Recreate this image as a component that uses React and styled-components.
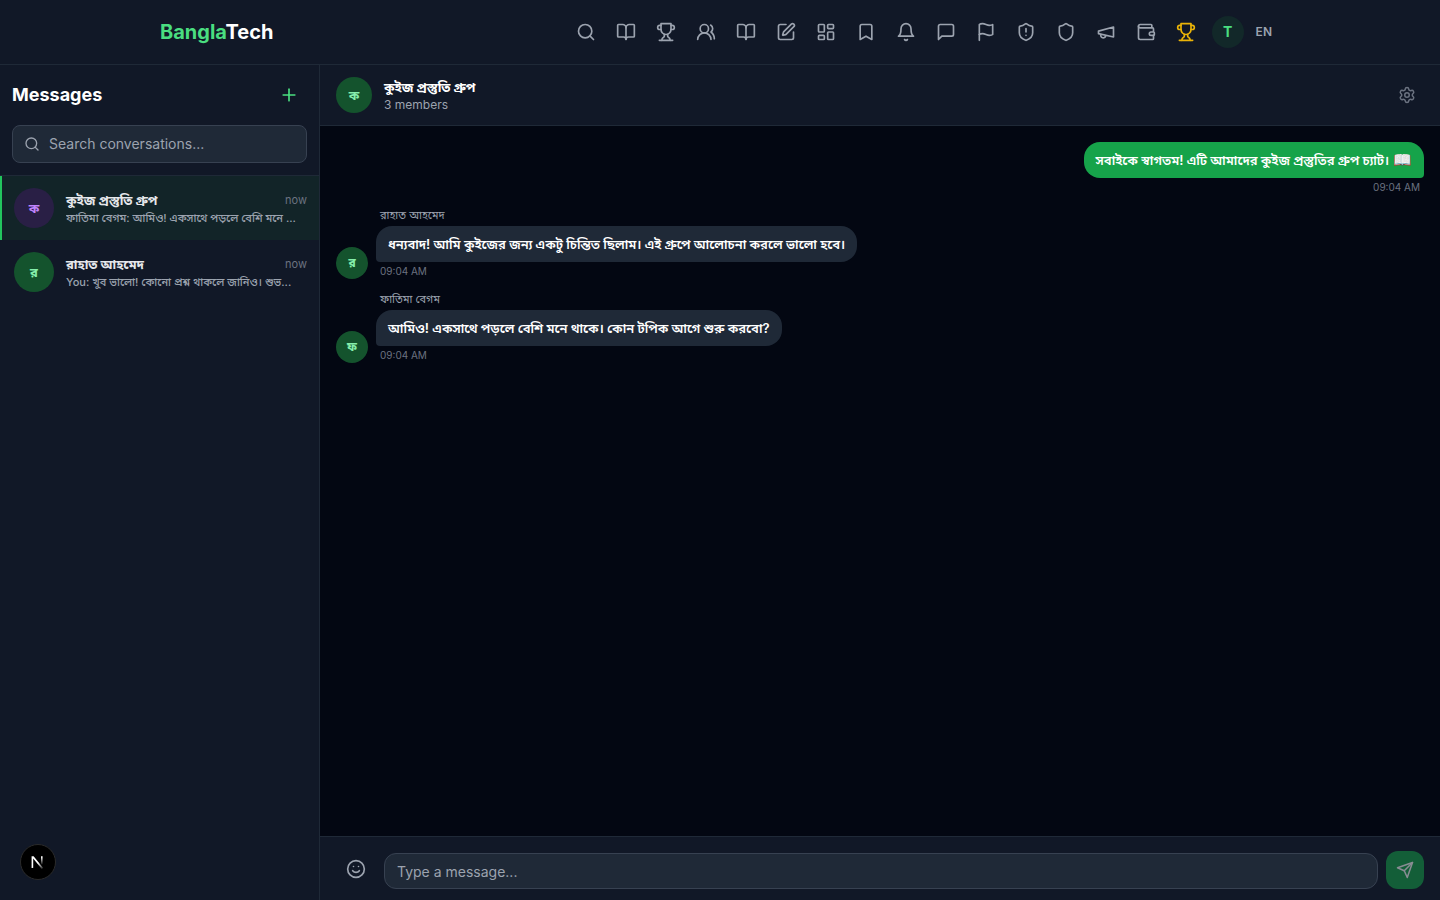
import React from "react";
import styled, { createGlobalStyle } from "styled-components";
import {
  Search,
  BookOpen,
  UsersRound,
  SquarePen,
  LayoutDashboard,
  Bookmark,
  ShieldAlert,
  Shield,
  Wallet,
  Plus,
  Settings,
  Smile,
} from "lucide-react";

const GlobalStyle = createGlobalStyle`
  * {
    box-sizing: border-box;
  }

  body {
    margin: 0;
    background: #030712;
    color: #ffffff;
    font-family: Inter, "Noto Sans Bengali", "Noto Sans", sans-serif;
    font-size: 14px;
    line-height: 20px;
    -webkit-font-smoothing: antialiased;
  }

  button,
  input,
  textarea {
    font: inherit;
  }
`;

const Page = styled.div`
  height: 100vh;
  display: flex;
  flex-direction: column;
  overflow: hidden;
`;

const TopBar = styled.header`
  flex-shrink: 0;
  background: #111827;
  border-bottom: 1px solid #1f2937;
`;

const TopBarInner = styled.div`
  max-width: 1152px;
  height: 64px;
  margin: 0 auto;
  padding: 0 16px;
  display: flex;
  align-items: center;
  justify-content: space-between;
`;

const Logo = styled.a`
  font-size: 20px;
  line-height: 28px;
  font-weight: 700;
  color: #ffffff;
  text-decoration: none;

  span {
    color: #4ade80;
  }
`;

const Nav = styled.nav`
  display: flex;
  align-items: center;
  gap: 4px;
`;

const NavLink = styled.a`
  padding: 8px;
  display: flex;
  color: ${({ $gold }) => ($gold ? "#eab308" : "#9ca3af")};
`;

const ProfileLink = styled.a`
  width: 32px;
  height: 32px;
  margin-left: 4px;
  border-radius: 50%;
  display: flex;
  align-items: center;
  justify-content: center;
  background: #122829;
  color: #4ade80;
  font-weight: 700;
  text-decoration: none;
`;

const LangButton = styled.button`
  padding: 4px 8px;
  border: none;
  background: none;
  color: #9ca3af;
  font-size: 12px;
  line-height: 16px;
  font-weight: 600;
`;

const Body = styled.div`
  flex: 1;
  min-height: 0;
  display: flex;
`;

const Sidebar = styled.aside`
  width: 320px;
  flex-shrink: 0;
  background: #111827;
  border-right: 1px solid #1f2937;
`;

const SidebarHead = styled.div`
  padding: 12px;
  border-bottom: 1px solid #1f2937;
`;

const TitleRow = styled.div`
  margin-bottom: 12px;
  display: flex;
  align-items: center;
  justify-content: space-between;
`;

const Title = styled.h1`
  margin: 0;
  font-size: 18px;
  line-height: 28px;
  font-weight: 700;
`;

const IconButton = styled.button`
  padding: ${({ $pad }) => $pad || "8px"};
  border: none;
  background: none;
  display: flex;
  color: ${({ $color }) => $color};
`;

const SearchBox = styled.label`
  height: 38px;
  padding: 0 11px;
  border: 1px solid #374151;
  border-radius: 8px;
  display: flex;
  align-items: center;
  gap: 9px;
  background: #1f2937;
  color: #9ca3af;
`;

const SearchInput = styled.input`
  flex: 1;
  min-width: 0;
  padding: 0;
  border: none;
  outline: none;
  background: none;
  color: #ffffff;

  &::placeholder {
    color: #9ca3af;
  }
`;

const Conversation = styled.button`
  width: 100%;
  padding: 12px;
  border: none;
  border-left: 2px solid ${({ $active }) => ($active ? "#22c55e" : "transparent")};
  display: flex;
  align-items: center;
  gap: 12px;
  background: ${({ $active }) => ($active ? "#122428" : "transparent")};
  text-align: left;
`;

const Avatar = styled.div`
  width: ${({ $size }) => $size}px;
  height: ${({ $size }) => $size}px;
  flex-shrink: 0;
  border-radius: 50%;
  display: flex;
  align-items: center;
  justify-content: center;
  background: ${({ $purple }) => ($purple ? "#291f45" : "#14532d")};
  color: ${({ $purple }) => ($purple ? "#c084fc" : "#86efac")};
  font-size: ${({ $size }) => ($size > 32 ? 13 : 12)}px;
  font-weight: 700;
`;

const ConversationText = styled.div`
  flex: 1;
  min-width: 0;
`;

const ConversationTop = styled.div`
  display: flex;
  align-items: center;
  justify-content: space-between;
`;

const ConversationName = styled.span`
  font-size: 13px;
  line-height: 20px;
  font-weight: 700;
  color: #e5e7eb;
`;

const ConversationTime = styled.span`
  font-size: 11px;
  line-height: 16px;
  color: #6b7280;
`;

const Preview = styled.div`
  font-size: 11px;
  line-height: 16px;
  font-weight: 500;
  color: #9ca3af;
  white-space: nowrap;
  overflow: hidden;
  text-overflow: ellipsis;
`;

const Chat = styled.main`
  flex: 1;
  min-width: 0;
  display: flex;
  flex-direction: column;
`;

const ChatHead = styled.div`
  height: 61px;
  padding: 0 16px;
  border-bottom: 1px solid #1f2937;
  display: flex;
  align-items: center;
  gap: 12px;
  background: #111827;
`;

const ChatInfo = styled.div`
  flex: 1;
`;

const ChatName = styled.h2`
  margin: 0;
  font-size: 13px;
  line-height: 20px;
  font-weight: 700;
`;

const Members = styled.div`
  font-size: 12px;
  line-height: 16px;
  color: #9ca3af;
`;

const Messages = styled.div`
  flex: 1;
  min-height: 0;
  padding: 16px;
  display: flex;
  flex-direction: column;
  gap: 12px;
  overflow-y: auto;
`;

const MessageRow = styled.div`
  display: flex;
  align-items: flex-end;
  justify-content: ${({ $own }) => ($own ? "flex-end" : "flex-start")};
  gap: 8px;
`;

const MessageColumn = styled.div`
  display: flex;
  flex-direction: column;
  align-items: ${({ $own }) => ($own ? "flex-end" : "flex-start")};
`;

const Sender = styled.div`
  margin-bottom: 2px;
  padding: 0 4px;
  font-size: 11px;
  line-height: 17px;
  color: #9ca3af;
`;

const Bubble = styled.div`
  padding: 8px 12px;
  border-radius: ${({ $own }) => ($own ? "16px 16px 4px 16px" : "16px 16px 16px 4px")};
  background: ${({ $own }) => ($own ? "#16a34a" : "#1f2937")};
  color: #ffffff;
  font-size: 13px;
  font-weight: 600;
`;

const Emoji = styled.span`
  font-size: 15px;
  line-height: 1;
`;

const SentAt = styled.div`
  margin-top: 2px;
  padding: 0 4px;
  font-size: 10px;
  line-height: 15px;
  color: #6b7280;
`;

const Composer = styled.form`
  padding: 12px 16px 11px;
  border-top: 1px solid #1f2937;
  display: flex;
  align-items: flex-end;
  gap: 8px;
  background: #111827;
`;

const MessageInput = styled.textarea`
  flex: 1;
  height: 36px;
  padding: 8px 12px;
  border: 1px solid #374151;
  border-radius: 12px;
  outline: none;
  resize: none;
  overflow: hidden;
  background: #1f2937;
  color: #ffffff;

  &::placeholder {
    color: #9ca3af;
  }
`;

const SendButton = styled.button`
  padding: 10px;
  border: none;
  border-radius: 12px;
  display: flex;
  background: #16a34a;
  color: #ffffff;
  opacity: 0.5;
`;

const DevBadge = styled.button`
  position: fixed;
  left: 20px;
  bottom: 20px;
  width: 36px;
  height: 36px;
  padding: 0;
  border: 1px solid #2b2b2b;
  border-radius: 50%;
  display: flex;
  align-items: center;
  justify-content: center;
  background: #000000;
`;

const Icon = ({ size = 20, children }) => (
  <svg
    width={size}
    height={size}
    viewBox="0 0 24 24"
    fill="none"
    stroke="currentColor"
    strokeWidth="2"
    strokeLinecap="round"
    strokeLinejoin="round"
    aria-hidden="true"
  >
    {children}
  </svg>
);

const TrophyIcon = () => (
  <Icon>
    <path d="M6 9H4.5a2.5 2.5 0 0 1 0-5H6" />
    <path d="M18 9h1.5a2.5 2.5 0 0 0 0-5H18" />
    <path d="M4 22h16" />
    <path d="M10 14.66V17c0 .55-.47.98-.97 1.21C7.85 18.75 7 20.24 7 22" />
    <path d="M14 14.66V17c0 .55.47.98.97 1.21C16.15 18.75 17 20.24 17 22" />
    <path d="M18 2H6v7a6 6 0 0 0 12 0V2Z" />
  </Icon>
);

const BellIcon = () => (
  <Icon>
    <path d="M6 8a6 6 0 0 1 12 0c0 7 3 9 3 9H3s3-2 3-9" />
    <path d="M10.3 21a1.94 1.94 0 0 0 3.4 0" />
  </Icon>
);

const MessageIcon = () => (
  <Icon>
    <path d="M21 15a2 2 0 0 1-2 2H7l-4 4V5a2 2 0 0 1 2-2h14a2 2 0 0 1 2 2z" />
  </Icon>
);

const FlagIcon = () => (
  <Icon>
    <path d="M4 15s1-1 4-1 5 2 8 2 4-1 4-1V3s-1 1-4 1-5-2-8-2-4 1-4 1z" />
    <path d="M4 22v-7" />
  </Icon>
);

const MegaphoneIcon = () => (
  <Icon>
    <path d="m3 11 18-5v12L3 14v-3z" />
    <path d="M11.6 16.8a3 3 0 1 1-5.8-1.6" />
  </Icon>
);

const SendIcon = () => (
  <Icon size={18}>
    <path d="m22 2-7 20-4-9-9-4Z" />
    <path d="M22 2 11 13" />
  </Icon>
);

const NextLogo = () => (
  <svg width="14" height="14" viewBox="0 0 14 14" fill="none" aria-hidden="true">
    <defs>
      <linearGradient id="diag" x1="7" y1="8" x2="12" y2="15" gradientUnits="userSpaceOnUse">
        <stop stopColor="#fff" />
        <stop offset="1" stopColor="#fff" stopOpacity="0" />
      </linearGradient>
      <linearGradient id="stem" x1="11" y1="2" x2="11" y2="10" gradientUnits="userSpaceOnUse">
        <stop stopColor="#fff" />
        <stop offset="1" stopColor="#fff" stopOpacity="0" />
      </linearGradient>
    </defs>
    <path d="M0.6 1.2H2.6L12.2 13L10.8 14L2.2 3.6V13H0.6Z" fill="url(#diag)" />
    <path d="M10 1.2h1.6v8.4H10Z" fill="url(#stem)" />
  </svg>
);

const NAV = [
  { label: "Search", icon: <Search size={20} /> },
  { label: "Courses", icon: <BookOpen size={20} /> },
  { label: "Quizzes", icon: <TrophyIcon /> },
  { label: "Community", icon: <UsersRound size={20} /> },
  { label: "Blog", icon: <BookOpen size={20} /> },
  { label: "Write", icon: <SquarePen size={20} /> },
  { label: "Dashboard", icon: <LayoutDashboard size={20} /> },
  { label: "Bookmarks", icon: <Bookmark size={20} /> },
  { label: "Notifications", icon: <BellIcon /> },
  { label: "Messages", icon: <MessageIcon /> },
  { label: "Reports", icon: <FlagIcon /> },
  { label: "Moderation", icon: <ShieldAlert size={20} /> },
  { label: "Admin", icon: <Shield size={20} /> },
  { label: "Announcements", icon: <MegaphoneIcon /> },
  { label: "Wallet", icon: <Wallet size={20} /> },
  { label: "Leaderboard", icon: <TrophyIcon />, gold: true },
];

const CONVERSATIONS = [
  {
    name: "কুইজ প্রস্তুতি গ্রুপ",
    initial: "ক",
    preview: "ফাতিমা বেগম: আমিও! একসাথে পড়লে বেশি মনে ...",
    group: true,
    active: true,
  },
  {
    name: "রাহাত আহমেদ",
    initial: "র",
    preview: "You: খুব ভালো! কোনো প্রশ্ন থাকলে জানিও। শুভ...",
  },
];

const MESSAGES = [
  { own: true, text: "সবাইকে স্বাগতম! এটি আমাদের কুইজ প্রস্তুতির গ্রুপ চ্যাট।", emoji: "📖" },
  {
    sender: "রাহাত আহমেদ",
    initial: "র",
    text: "ধন্যবাদ! আমি কুইজের জন্য একটু চিন্তিত ছিলাম। এই গ্রুপে আলোচনা করলে ভালো হবে।",
  },
  {
    sender: "ফাতিমা বেগম",
    initial: "ফ",
    text: "আমিও! একসাথে পড়লে বেশি মনে থাকে। কোন টপিক আগে শুরু করবো?",
  },
];

const App = () => {
  return (
    <>
      <GlobalStyle />
      <Page>
        <TopBar>
          <TopBarInner>
            <Logo href="#">
              <span>Bangla</span>Tech
            </Logo>
            <Nav>
              {NAV.map((item) => (
                <NavLink key={item.label} href="#" aria-label={item.label} $gold={item.gold}>
                  {item.icon}
                </NavLink>
              ))}
              <ProfileLink href="#">T</ProfileLink>
              <LangButton type="button">EN</LangButton>
            </Nav>
          </TopBarInner>
        </TopBar>
        <Body>
          <Sidebar>
            <SidebarHead>
              <TitleRow>
                <Title>Messages</Title>
                <IconButton type="button" aria-label="New conversation" $color="#4ade80">
                  <Plus size={20} />
                </IconButton>
              </TitleRow>
              <SearchBox>
                <Search size={16} />
                <SearchInput
                  type="text"
                  aria-label="Search conversations"
                  placeholder="Search conversations..."
                />
              </SearchBox>
            </SidebarHead>
            {CONVERSATIONS.map((item) => (
              <Conversation key={item.name} type="button" $active={item.active}>
                <Avatar $size={40} $purple={item.group}>
                  {item.initial}
                </Avatar>
                <ConversationText>
                  <ConversationTop>
                    <ConversationName>{item.name}</ConversationName>
                    <ConversationTime>now</ConversationTime>
                  </ConversationTop>
                  <Preview>{item.preview}</Preview>
                </ConversationText>
              </Conversation>
            ))}
          </Sidebar>
          <Chat>
            <ChatHead>
              <Avatar $size={36}>ক</Avatar>
              <ChatInfo>
                <ChatName>কুইজ প্রস্তুতি গ্রুপ</ChatName>
                <Members>3 members</Members>
              </ChatInfo>
              <IconButton type="button" aria-label="Group settings" $color="#6b7280">
                <Settings size={18} />
              </IconButton>
            </ChatHead>
            <Messages>
              {MESSAGES.map((item) => (
                <MessageRow key={item.text} $own={item.own}>
                  {!item.own && <Avatar $size={32}>{item.initial}</Avatar>}
                  <MessageColumn $own={item.own}>
                    {item.sender && <Sender>{item.sender}</Sender>}
                    <Bubble $own={item.own}>
                      {item.text}
                      {item.emoji && <Emoji> {item.emoji}</Emoji>}
                    </Bubble>
                    <SentAt>09:04 AM</SentAt>
                  </MessageColumn>
                </MessageRow>
              ))}
            </Messages>
            <Composer>
              <IconButton type="button" aria-label="Emoji" $pad="10px" $color="#9ca3af">
                <Smile size={20} />
              </IconButton>
              <MessageInput rows={1} aria-label="Message" placeholder="Type a message..." />
              <SendButton type="button" aria-label="Send">
                <SendIcon />
              </SendButton>
            </Composer>
          </Chat>
        </Body>
      </Page>
      <DevBadge type="button" aria-label="Open developer tools">
        <NextLogo />
      </DevBadge>
    </>
  );
};

export default App;
